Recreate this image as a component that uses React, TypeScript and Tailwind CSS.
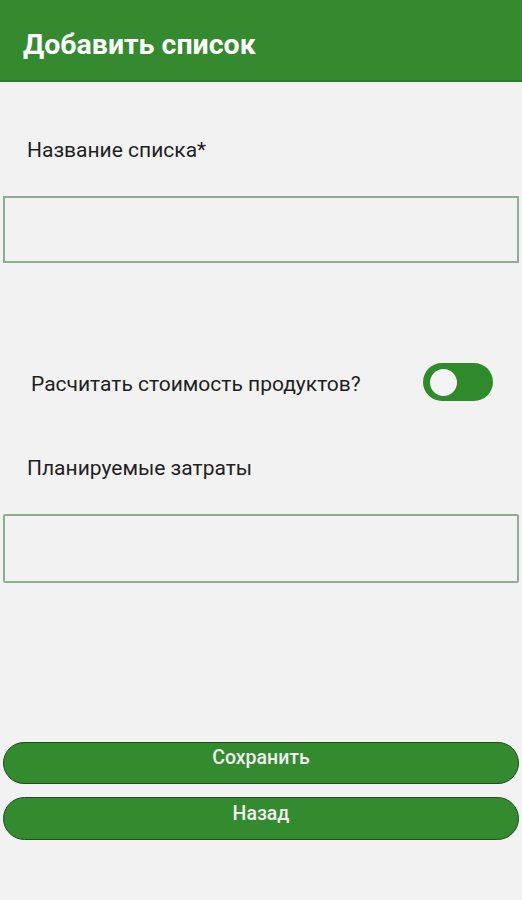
import { useState } from "react";

function Toggle({ on, onChange }: { on: boolean; onChange: (v: boolean) => void }) {
  return (
    <button
      type="button"
      onClick={() => onChange(!on)}
      className="flex h-[38px] w-[70px] shrink-0 items-center rounded-full bg-[#2f8a2b] px-[7px]"
      aria-pressed={on}
    >
      <span
        className={
          on
            ? "ml-auto h-[27px] w-[27px] rounded-full bg-[#f4f4f4]"
            : "h-[27px] w-[27px] rounded-full bg-[#f4f4f4]"
        }
      />
    </button>
  );
}

export default function App() {
  const [calc, setCalc] = useState(false);

  return (
    <div className="min-h-screen bg-[#f2f2f2] font-['Roboto',sans-serif] text-[#1f1f1f]">
      <header className="flex h-[82px] items-center border-b-2 border-[#2c7d27] bg-[#358a2f] px-[23px] pt-[10px]">
        <h1 className="text-[28.5px] font-bold leading-[34px] text-white">Добавить список</h1>
      </header>

      <main className="flex flex-col px-[3px]">
        <label className="ml-[24px] mt-[55px] text-[21px] leading-[26px]">Название списка*</label>
        <input
          type="text"
          className="mt-[33px] h-[67px] w-full border-2 border-[#8fae8d] bg-transparent px-3 text-[18px] outline-none"
        />

        <div className="mt-[100px] flex h-[38px] items-center justify-between pl-[28px] pr-[26px]">
          <span className="pt-[3px] text-[21px] leading-[26px]">Расчитать стоимость продуктов?</span>
          <Toggle on={calc} onChange={setCalc} />
        </div>

        <label className="ml-[24px] mt-[54px] text-[21px] leading-[26px]">Планируемые затраты</label>
        <input
          type="text"
          className="mt-[33px] h-[69px] w-full rounded-[2px] border-2 border-[#8fae8d] bg-transparent px-3 text-[18px] outline-none"
        />

        <button
          type="button"
          className="mt-[159px] h-[42px] w-full rounded-full border border-[#1d4f1b] bg-[#348a2f] pb-[10px] text-[19.5px] font-medium text-[#f0f0f0]"
        >
          Сохранить
        </button>
        <button
          type="button"
          className="mt-[13px] h-[43px] w-full rounded-full border border-[#1d4f1b] bg-[#348a2f] pb-[10px] text-[19.5px] font-medium text-[#f0f0f0]"
        >
          Назад
        </button>
      </main>
    </div>
  );
}
